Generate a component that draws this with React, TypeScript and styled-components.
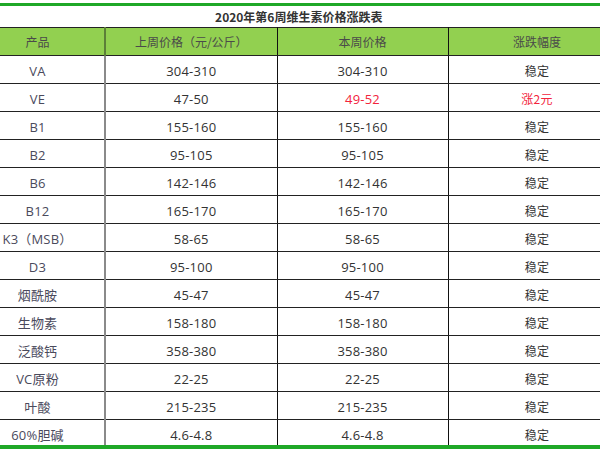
import styled, { createGlobalStyle } from "styled-components";

const GlobalStyle = createGlobalStyle`
  html, body {
    margin: 0;
    padding: 0;
    background: #fff;
  }
  body {
    font-family: "Open Sans", "Noto Sans CJK SC", sans-serif;
  }
`;

type Row = {
  name: string;
  last: string;
  current: string;
  change: string;
  up?: boolean;
};

const rows: Row[] = [
  { name: "VA", last: "304-310", current: "304-310", change: "稳定" },
  { name: "VE", last: "47-50", current: "49-52", change: "涨2元", up: true },
  { name: "B1", last: "155-160", current: "155-160", change: "稳定" },
  { name: "B2", last: "95-105", current: "95-105", change: "稳定" },
  { name: "B6", last: "142-146", current: "142-146", change: "稳定" },
  { name: "B12", last: "165-170", current: "165-170", change: "稳定" },
  { name: "K3（MSB）", last: "58-65", current: "58-65", change: "稳定" },
  { name: "D3", last: "95-100", current: "95-100", change: "稳定" },
  { name: "烟酰胺", last: "45-47", current: "45-47", change: "稳定" },
  { name: "生物素", last: "158-180", current: "158-180", change: "稳定" },
  { name: "泛酸钙", last: "358-380", current: "358-380", change: "稳定" },
  { name: "VC原粉", last: "22-25", current: "22-25", change: "稳定" },
  { name: "叶酸", last: "215-235", current: "215-235", change: "稳定" },
  { name: "60%胆碱", last: "4.6-4.8", current: "4.6-4.8", change: "稳定" },
];

const Page = styled.div`
  width: 600px;
  height: 450px;
  overflow: hidden;
  display: flex;
  flex-direction: column;
  padding-top: 3px;
  box-sizing: border-box;
`;

const GreenBar = styled.div<{ $h: number }>`
  height: ${(p) => p.$h}px;
  background: #1fa828;
  flex-shrink: 0;
`;

const Viewport = styled.div`
  flex: 1;
  overflow: hidden;
`;

const Table = styled.table`
  margin-left: -29px;
  width: 655px;
  border-collapse: collapse;
  table-layout: fixed;
  font-size: 13px;
  color: #333;
`;

const Title = styled.caption`
  height: 21px;
  line-height: 21px;
  font-size: 12px;
  font-weight: bold;
  color: #333;
  font-family: "Noto Sans CJK SC", sans-serif;
  text-align: center;
`;

const HeadCell = styled.th<{ $first?: boolean }>`
  height: 27px;
  padding: 0;
  background: #92d050;
  font-weight: normal;
  font-size: 12px;
  color: #4a4a4a;
  font-family: "Noto Sans CJK SC", sans-serif;
  border-top: 1px solid #222;
  border-bottom: 1px solid #222;
  border-right: ${(p) => (p.$first ? "2px solid #5c7f38" : "1px solid #111")};
  text-align: center;
`;

const Cell = styled.td<{ $first?: boolean; $red?: boolean; $name?: boolean }>`
  height: 28px;
  padding: 0;
  padding-top: 2px;
  box-sizing: border-box;
  text-align: center;
  border-bottom: 1px solid #222;
  border-right: ${(p) => (p.$first ? "2px solid #8a8a8a" : "1px solid #111")};
  color: ${(p) => (p.$red ? "#f2243c" : p.$name ? "#4a4a5c" : "#333")};
  white-space: nowrap;
  letter-spacing: 0.2px;
`;

const Change = styled.span<{ $red?: boolean }>`
  font-family: "Noto Sans CJK SC", sans-serif;
  font-size: 12px;
  color: ${(p) => (p.$red ? "#f2243c" : "#333")};
`;

export default function App() {
  return (
    <>
      <GlobalStyle />
      <Page>
        <GreenBar $h={3} />
        <Viewport>
          <Table>
            <Title>2020年第6周维生素价格涨跌表</Title>
            <colgroup>
              <col style={{ width: 134 }} />
              <col style={{ width: 172 }} />
              <col style={{ width: 171 }} />
              <col style={{ width: 178 }} />
            </colgroup>
            <thead>
              <tr>
                <HeadCell $first>产品</HeadCell>
                <HeadCell>上周价格（元/公斤）</HeadCell>
                <HeadCell>本周价格</HeadCell>
                <HeadCell>涨跌幅度</HeadCell>
              </tr>
            </thead>
            <tbody>
              {rows.map((r) => (
                <tr key={r.name}>
                  <Cell $first $name>
                    {r.name}
                  </Cell>
                  <Cell>{r.last}</Cell>
                  <Cell $red={r.up}>{r.current}</Cell>
                  <Cell>
                    <Change $red={r.up}>{r.change}</Change>
                  </Cell>
                </tr>
              ))}
            </tbody>
          </Table>
        </Viewport>
        <GreenBar $h={4} />
        <div style={{ height: 1 }} />
      </Page>
    </>
  );
}
